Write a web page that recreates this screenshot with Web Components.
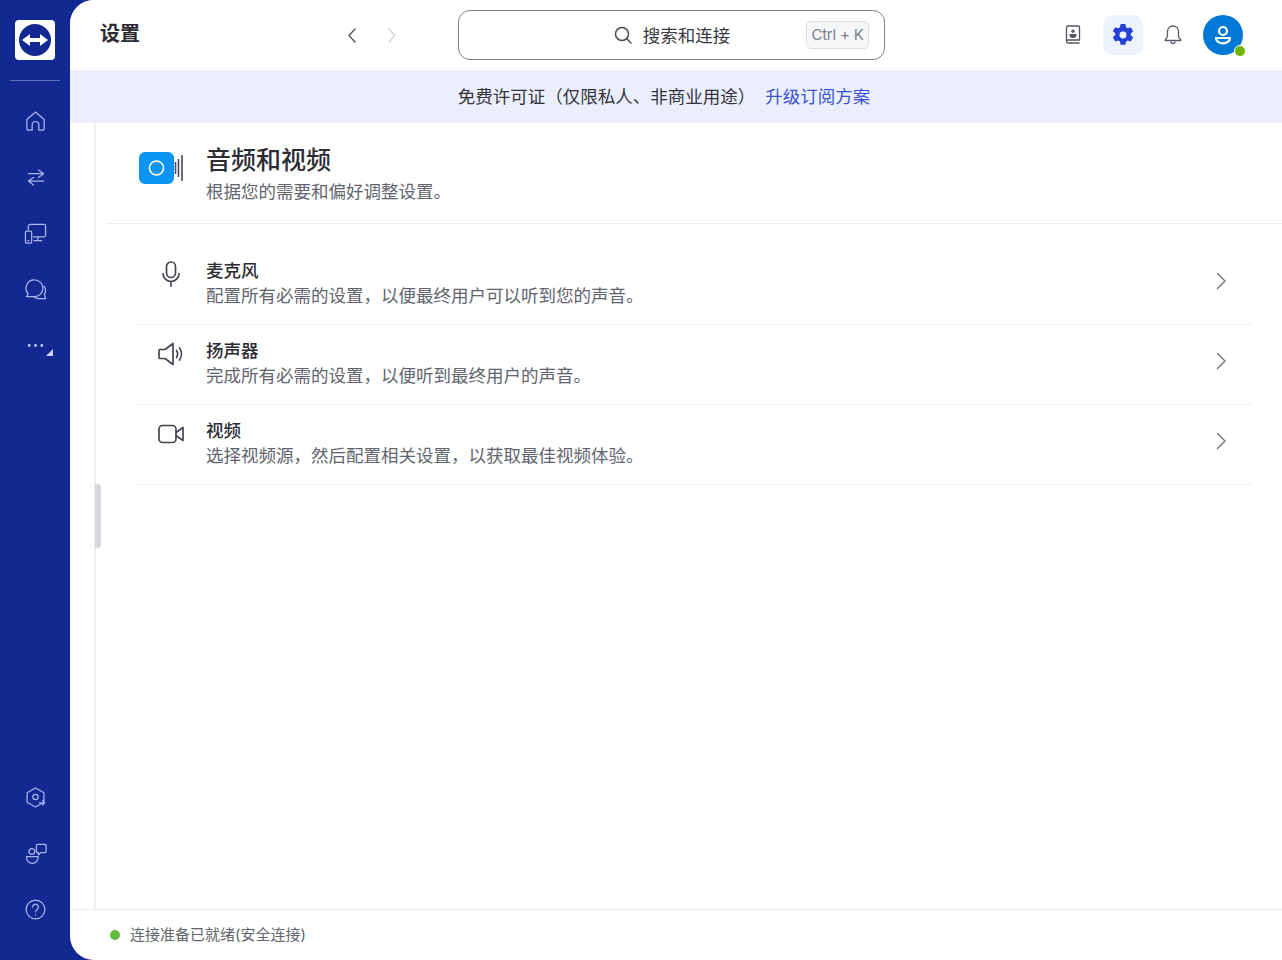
<!DOCTYPE html>
<html lang="zh">
<head>
<meta charset="utf-8">
<title>设置</title>
<style>
    html, body {
        margin: 0;
        height: 100%;
        overflow: hidden;
        background: #142891;
        font-family: "Inter", "Noto Sans CJK SC", sans-serif;
    }
</style>
</head>
<body>
<tv-app>
    <tv-nav slot="nav">
        <tv-nav-item>
            <svg viewBox="0 0 24 24"><path d="M3 10 12 2l9 8v9a2 2 0 0 1-2 2h-3.500v-5.500a3.500 3.500 0 0 0-7 0V21H5a2 2 0 0 1-2-2z"/></svg>
        </tv-nav-item>
        <tv-nav-item>
            <svg viewBox="0 0 24 24"><path d="M4.500 8h16M15 4.100l5.500 3.900L15 11.900M20.500 15.700h-16M10 11.900l-5.500 3.800 5.500 4.200"/></svg>
        </tv-nav-item>
        <tv-nav-item>
            <svg viewBox="0 0 24 24"><path d="M4.500 8V4.500a2 2 0 0 1 2-2H21a1.500 1.500 0 0 1 1.500 1.500v10a1.500 1.500 0 0 1-1.500 1.500H10M14.500 15.500v4M10.500 19.500h8"/><rect x="1.500" y="9.500" width="6.500" height="12.500" rx="1.300"/><path d="M4 19.500h1"/></svg>
        </tv-nav-item>
        <tv-nav-item>
            <svg viewBox="0 0 24 24"><path d="M11 2a8.800 8.800 0 0 1 8.800 8.700A8.800 8.800 0 0 1 11 19.400H2.500l2-2.700A8.700 8.700 0 0 1 11 2z"/><path d="M21 8.500c1 1.300 1.500 2.800 1.500 4.400 0 1.500-.4 2.900-1.200 4.100l1.200 4.500H15.500a8 8 0 0 1-5-2"/></svg>
        </tv-nav-item>
        <tv-nav-item more>
            <svg viewBox="0 0 24 24"><circle cx="5.400" cy="12" r="1.500" fill="#c0cbf2" stroke="none"/><circle cx="12" cy="12" r="1.500" fill="#c0cbf2" stroke="none"/><circle cx="18.600" cy="12" r="1.500" fill="#c0cbf2" stroke="none"/></svg>
        </tv-nav-item>

        <tv-nav-item slot="bottom">
            <svg viewBox="0 0 24 24"><path d="M12 2 20.800 7v10L12 22l-8.800-5V7z"/><circle cx="12" cy="11.500" r="2.800"/><path d="M16 17.500h5.500M19.500 15l2 2.500-2 2.500"/></svg>
        </tv-nav-item>
        <tv-nav-item slot="bottom">
            <svg viewBox="0 0 24 24"><circle cx="8.200" cy="10" r="3"/><path d="M2.600 15.200h12.200c.3 4-2.500 7.100-6.100 7.100s-6.400-3.100-6.100-7.100z"/><path d="M14 2.600h8a1 1 0 0 1 1 1v6.500a1 1 0 0 1-1 1h-4.500L15 13.500v-2.400h-1a1 1 0 0 1-1-1V3.600a1 1 0 0 1 1-1z"/></svg>
        </tv-nav-item>
        <tv-nav-item slot="bottom">
            <svg viewBox="0 0 24 24"><circle cx="12" cy="12" r="9.800"/><path d="M9 9.500a3 3 0 1 1 4.700 2.500c-1 .7-1.700 1.300-1.700 2.500"/><path d="M12 17.500v.5"/></svg>
        </tv-nav-item>
    </tv-nav>

    <tv-topbar slot="top" heading="设置" placeholder="搜索和连接" shortcut="Ctrl + K"></tv-topbar>
    <tv-banner slot="top" link="升级订阅方案">免费许可证（仅限私人、非商业用途）</tv-banner>

    <tv-page heading="音频和视频" summary="根据您的需要和偏好调整设置。">
        <tv-row heading="麦克风" text="配置所有必需的设置，以便最终用户可以听到您的声音。">
            <svg viewBox="0 0 26 26" width="26" height="26"><rect x="8.500" y="1" width="9" height="15.500" rx="4.500"/><path d="M5 12.500a8 8 0 0 0 16 0M13 20.500V25"/></svg>
        </tv-row>
        <tv-row heading="扬声器" text="完成所有必需的设置，以便听到最终用户的声音。">
            <svg viewBox="0 0 26 26" width="26" height="26"><path d="M1 9.500a1 1 0 0 1 1-1h5L15 2.500v21L7 17.500H2a1 1 0 0 1-1-1zM18.500 9.500c1.300 2 1.300 5 0 7M21.500 7c2.500 3.500 2.500 8.500 0 12"/></svg>
        </tv-row>
        <tv-row heading="视频" text="选择视频源，然后配置相关设置，以获取最佳视频体验。">
            <svg viewBox="0 0 26 26" width="26" height="26"><rect x="1" y="4.500" width="17" height="17" rx="3.500"/><path d="M18 11.500 25 6.500v13L18 14.500"/></svg>
        </tv-row>
    </tv-page>

    <tv-status slot="status">连接准备已就绪(安全连接)</tv-status>
</tv-app>

<script>
// Helper function: attach an open shadow root from a markup string.
function mount(el, html) {
    const shadowRoot = el.attachShadow({ mode: 'open' });
    const template = document.createElement('template');
    template.innerHTML = html;
    shadowRoot.appendChild(template.content.cloneNode(true));
    return shadowRoot;
}

// Page frame: blue rail, white rounded sheet.
class TvApp extends HTMLElement {
    constructor() {
        super();
        mount(this, `
        <style>
            :host { display: flex; height: 960px; background: #142891; }
            .rail { flex: 0 0 70px; display: flex; }
            .sheet {
                flex: 1;
                min-width: 0;
                display: flex;
                flex-direction: column;
                background: #fff;
                border-radius: 24px 0 0 24px;
                overflow: hidden;
            }
            .main { flex: 1; min-height: 0; display: flex; position: relative; }
            .gutter { flex: 0 0 24px; border-right: 2px solid #eeeef4; }
            .handle {
                position: absolute;
                left: 25px;
                top: 361px;
                width: 6px;
                height: 64px;
                background: #d6d7dd;
                border-radius: 0 4px 4px 0;
            }
            .content { flex: 1; min-width: 0; }
        </style>
        <div class="rail"><slot name="nav"></slot></div>
        <div class="sheet">
            <slot name="top"></slot>
            <div class="main">
                <div class="gutter"></div>
                <div class="handle"></div>
                <div class="content"><slot></slot></div>
            </div>
            <slot name="status"></slot>
        </div>`);
    }
}

class TvNav extends HTMLElement {
    constructor() {
        super();
        mount(this, `
        <style>
            :host {
                width: 70px;
                display: flex;
                flex-direction: column;
                align-items: center;
                padding: 20px 0 23px;
                box-sizing: border-box;
            }
            .logo { width: 40px; height: 40px; background: #fff; border-radius: 4px; display: flex; }
            hr {
                width: 50px;
                height: 1px;
                margin: 20px 0 12px;
                border: 0;
                background: #5f71bd;
            }
            .spacer { flex: 1; }
        </style>
        <div class="logo">
            <svg viewBox="0 0 40 40" width="40" height="40">
                <circle cx="20" cy="20" r="16" fill="#142891"/>
                <path fill="#fff" d="M7 20l8-6v4h10v-4l8 6-8 6v-4H15v4z"/>
            </svg>
        </div>
        <hr>
        <slot></slot>
        <div class="spacer"></div>
        <slot name="bottom"></slot>`);
    }
}

class TvNavItem extends HTMLElement {
    constructor() {
        super();
        mount(this, `
        <style>
            :host {
                width: 70px;
                height: 56px;
                display: flex;
                align-items: center;
                justify-content: center;
                position: relative;
            }
            ::slotted(svg) {
                width: 23px;
                height: 23px;
                fill: none;
                stroke: #a8b6ec;
                stroke-width: 1.3;
                stroke-linecap: round;
                stroke-linejoin: round;
            }
            .corner {
                display: none;
                position: absolute;
                left: 46px;
                top: 32px;
                width: 0;
                height: 0;
                border-style: solid;
                border-width: 0 0 7px 7px;
                border-color: transparent transparent #c9d3f5 transparent;
            }
            :host([more]) .corner { display: block; }
        </style>
        <slot></slot>
        <span class="corner"></span>`);
    }
}

class TvTopbar extends HTMLElement {
    constructor() {
        super();
        const shadowRoot = mount(this, `
        <style>
            :host {
                display: flex;
                align-items: center;
                height: 70px;
                padding: 0 39px 0 30px;
                border-bottom: 1px solid #e9ebf5;
                background: #fff;
            }
            h1 {
                flex: 0 0 242px;
                margin: 0 0 2px;
                font-size: 20px;
                line-height: 30px;
                font-weight: 600;
                color: #2c2c33;
            }
            .pager { flex: 0 0 116px; display: flex; gap: 20px; }
            .pager svg { width: 20px; height: 20px; fill: none; stroke: #55565f; stroke-width: 1.4; stroke-linecap: round; stroke-linejoin: round; }
            .pager svg.off { stroke: #d3d5dc; }
            .search {
                flex: 0 0 427px;
                box-sizing: border-box;
                height: 50px;
                display: flex;
                align-items: center;
                justify-content: center;
                position: relative;
                border: 1px solid #7d7d88;
                border-radius: 12px;
                font-size: 17.500px;
                color: #3a3a42;
            }
            .search svg { width: 20px; height: 20px; margin: 0 10px 0 0; fill: none; stroke: #4a4b54; stroke-width: 1.500; stroke-linecap: round; }
            .hint { padding-bottom: 2px; }
            kbd {
                position: absolute;
                right: 15px;
                top: 10px;
                box-sizing: border-box;
                width: 63px;
                height: 28px;
                border: 1px solid #dcdee3;
                border-radius: 5px;
                background: #f5f6f8;
                font: 15px/26px "Inter", sans-serif;
                letter-spacing: -0.2px;
                color: #7b808c;
                text-align: center;
            }
            .tools { margin-left: auto; display: flex; align-items: center; gap: 10px; }
            .tool { width: 40px; height: 40px; display: flex; align-items: center; justify-content: center; border-radius: 9px; }
            .tool svg { width: 22px; height: 22px; }
            .tool.on { background: #edf3fe; }
            .tool.on svg { width: 24px; height: 24px; }
            .avatar { width: 40px; height: 40px; border-radius: 50%; background: #0079d6; display: flex; align-items: center; justify-content: center; position: relative; }
            .avatar i {
                position: absolute;
                right: -2.500px;
                bottom: -2px;
                width: 10px;
                height: 10px;
                border: 1.500px solid #fff;
                border-radius: 50%;
                background: #6fb400;
            }
        </style>
        <h1></h1>
        <div class="pager">
            <svg viewBox="0 0 20 20"><path d="M13 4 7 10.500l6 6.500"/></svg>
            <svg class="off" viewBox="0 0 20 20"><path d="M7 4l6 6.500L7 17"/></svg>
        </div>
        <div class="search">
            <svg viewBox="0 0 20 20"><circle cx="9" cy="9" r="6.500"/><path d="M14 14l4 4"/></svg>
            <span class="hint"></span>
            <kbd></kbd>
        </div>
        <div class="tools">
            <div class="tool">
                <svg viewBox="0 0 22 22" fill="none" stroke="#55565f" stroke-width="1.300">
                    <path d="M4.500 17V3.500a1.500 1.500 0 0 1 1.500-1.500h10.500a1 1 0 0 1 1 1V16H6a1.500 1.500 0 0 0-1.500 1.500A1.500 1.500 0 0 0 6 19h11.500"/>
                    <circle cx="11" cy="7.300" r="1.700" fill="#55565f" stroke="none"/>
                    <path d="M7.500 10h7v1.500a3 3 0 0 1-3 2.500h-1a3 3 0 0 1-3-2.500z" fill="#55565f" stroke="none"/>
                </svg>
            </div>
            <div class="tool on">
                <svg viewBox="0 0 22 22"><path fill="#2342d4" fill-rule="evenodd" d="M8.800 1h4.400l.6 2.900 1.500.9 2.800-1 2.200 3.800-2.200 2 .1 1.700 2.100 1.900-2.200 3.800-2.800-.9-1.500.9-.6 2.900H8.800l-.6-2.900-1.500-.9-2.800.9L1.700 13l2.200-1.900V9.400L1.700 7.600l2.200-3.800 2.800 1 1.500-.9zM11 7.800a3.200 3.200 0 1 0 0 6.400 3.200 3.200 0 0 0 0-6.400z"/></svg>
            </div>
            <div class="tool">
                <svg viewBox="0 0 22 22" fill="none" stroke="#5a5b64" stroke-width="1.300" stroke-linejoin="round"><path d="M11 2c-3.300 0-5.500 2.400-5.500 5.600v4.200c0 1.600-.8 2.800-2.300 4v.7h15.600v-.7c-1.500-1.200-2.300-2.400-2.300-4V7.600C16.500 4.400 14.300 2 11 2z"/><path d="M9 17.500c0 2.800 4 2.800 4 0"/></svg>
            </div>
            <div class="avatar">
                <svg viewBox="0 0 22 22" width="22" height="22" fill="none" stroke="#fff" stroke-width="2.200"><circle cx="11" cy="7" r="4"/><path d="M4 14h14c0 3.300-3.500 5.300-7 5.300S4 17.300 4 14z"/></svg>
                <i></i>
            </div>
        </div>`);
        shadowRoot.querySelector('h1').textContent = this.getAttribute('heading');
        shadowRoot.querySelector('.hint').textContent = this.getAttribute('placeholder');
        shadowRoot.querySelector('kbd').textContent = this.getAttribute('shortcut');
    }
}

class TvBanner extends HTMLElement {
    constructor() {
        super();
        const shadowRoot = mount(this, `
        <style>
            :host {
                display: flex;
                align-items: center;
                justify-content: center;
                gap: 10px;
                box-sizing: border-box;
                height: 52px;
                padding: 0 24px 4px 0;
                background: #ebeffd;
                font-size: 17.500px;
                color: #33343b;
            }
            a { color: #3a51d6; text-decoration: none; }
        </style>
        <span><slot></slot></span>
        <a href="#"></a>`);
        shadowRoot.querySelector('a').textContent = this.getAttribute('link');
    }
}

class TvPage extends HTMLElement {
    constructor() {
        super();
        const shadowRoot = mount(this, `
        <style>
            :host { display: block; }
            header {
                display: flex;
                margin-left: 11px;
                padding: 20px 0 19px 32px;
                border-bottom: 1px solid #ebecf1;
            }
            .badge { flex: 0 0 45px; margin: 9px 22px 0 0; height: 32px; }
            h2 {
                margin: 0 0 2px;
                font-size: 25px;
                line-height: 34px;
                font-weight: 500;
                color: #2c2c33;
            }
            p { margin: 0; font-size: 17.500px; line-height: 25px; color: #62646e; }
            .rows { padding: 21px 30px 0 40px; }
        </style>
        <header>
            <svg class="badge" viewBox="0 0 45 32" width="45" height="32">
                <rect width="35" height="32" rx="6" fill="#0a95f5"/>
                <circle cx="17.500" cy="16" r="7" fill="none" stroke="#fff" stroke-width="1.600"/>
                <path d="M36.500 10v12M39.500 7v18M43 3v26" stroke="#4a4b54" stroke-width="1.600" fill="none"/>
            </svg>
            <div>
                <h2></h2>
                <p></p>
            </div>
        </header>
        <div class="rows"><slot></slot></div>`);
        shadowRoot.querySelector('h2').textContent = this.getAttribute('heading');
        shadowRoot.querySelector('p').textContent = this.getAttribute('summary');
    }
}

class TvRow extends HTMLElement {
    constructor() {
        super();
        const shadowRoot = mount(this, `
        <style>
            :host {
                display: flex;
                align-items: flex-start;
                box-sizing: border-box;
                height: 80px;
                padding: 13px 20px 0 22px;
                border-bottom: 1px solid #ebecf1;
            }
            .icon { flex: 0 0 26px; height: 26px; margin: 0 22px 0 0; padding-top: 3px; }
            ::slotted(svg) {
                display: block;
                fill: none;
                stroke: #45464f;
                stroke-width: 1.700;
                stroke-linecap: round;
                stroke-linejoin: round;
            }
            .text { flex: 1; font-size: 17.500px; line-height: 25px; }
            b { display: block; font-weight: 500; color: #2c2c33; }
            span { color: #62646e; }
            .chevron { width: 20px; height: 20px; margin-top: 13px; fill: none; stroke: #6a6b74; stroke-width: 1.300; stroke-linecap: round; stroke-linejoin: round; }
        </style>
        <div class="icon"><slot></slot></div>
        <div class="text"><b></b><span></span></div>
        <svg class="chevron" viewBox="0 0 20 20"><path d="M5.500 2.500l7.500 7.500-7.500 7.500"/></svg>`);
        shadowRoot.querySelector('b').textContent = this.getAttribute('heading');
        shadowRoot.querySelector('span').textContent = this.getAttribute('text');
    }
}

class TvStatus extends HTMLElement {
    constructor() {
        super();
        mount(this, `
        <style>
            :host {
                display: flex;
                align-items: center;
                gap: 10px;
                height: 50px;
                padding-left: 40px;
                border-top: 1px solid #ebecf1;
                font-size: 15px;
                color: #62646e;
            }
            i { width: 10px; height: 10px; border-radius: 50%; background: #62bb3c; }
            span { padding-bottom: 4px; }
        </style>
        <i></i><span><slot></slot></span>`);
    }
}

// Add elements to the list of customElements.
customElements.define('tv-app', TvApp);
customElements.define('tv-nav', TvNav);
customElements.define('tv-nav-item', TvNavItem);
customElements.define('tv-topbar', TvTopbar);
customElements.define('tv-banner', TvBanner);
customElements.define('tv-page', TvPage);
customElements.define('tv-row', TvRow);
customElements.define('tv-status', TvStatus);
</script>
</body>
</html>
